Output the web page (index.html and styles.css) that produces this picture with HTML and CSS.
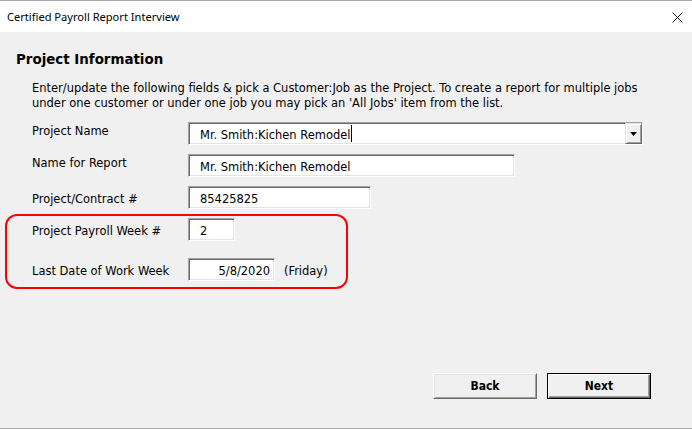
FILE: index.html
```html
<!DOCTYPE html>
<html lang="en">
<head>
<meta charset="utf-8">
<title>Certified Payroll Report Interview</title>
<link rel="stylesheet" href="styles.css">
</head>
<body>
<div class="window">
  <div class="titlebar">
    <span class="title">Certified Payroll Report Interview</span>
    <svg class="close" width="11" height="11" viewBox="0 0 11 11"><path d="M0.5 0.5 L10.5 10.5 M10.5 0.5 L0.5 10.5" stroke="#111" stroke-width="1" fill="none"/></svg>
  </div>
  <div class="content">
    <h1 class="heading">Project Information</h1>
    <p class="intro">Enter/update the following fields &amp; pick a Customer:Job as the Project. To create a report for multiple jobs<br>under one customer or under one job you may pick an 'All Jobs' item from the list.</p>
    <div class="form">
      <div class="row">
        <div class="label label-high">Project Name</div>
        <div class="combo w-combo">
          <span class="field-text">Mr. Smith:Kichen Remodel<span class="caret"></span></span>
          <span class="drop"><svg width="7" height="4" viewBox="0 0 7 4"><path d="M0 0 H7 L3.5 4 Z" fill="#000"/></svg></span>
        </div>
      </div>
      <div class="row row-gap">
        <div class="label label-high">Name for Report</div>
        <div class="field w-name"><span class="field-text">Mr. Smith:Kichen Remodel</span></div>
      </div>
      <div class="row row-gap">
        <div class="label">Project/Contract #</div>
        <div class="field w-contract"><span class="field-text">85425825</span></div>
      </div>
      <div class="highlight">
        <div class="row">
          <div class="label">Project Payroll Week #</div>
          <div class="field w-week"><span class="field-text">2</span></div>
        </div>
        <div class="row row-gap-lg">
          <div class="label">Last Date of Work Week</div>
          <div class="field w-date field-right"><span class="field-text">5/8/2020</span></div>
          <span class="note">(Friday)</span>
        </div>
      </div>
    </div>
    <div class="actions">
      <button class="btn" type="button">Back</button>
      <button class="btn btn-default" type="button">Next</button>
    </div>
  </div>
</div>
</body>
</html>
```
FILE: styles.css
```css
* { box-sizing: border-box; }
html, body { margin: 0; padding: 0; background: #f0f0f0; }
body {
  font-family: "DejaVu Sans Condensed", "DejaVu Sans", sans-serif;
  font-stretch: condensed;
  font-size: 12.75px;
  color: #000;
}
.window {
  width: 692px;
  height: 429px;
  display: flex;
  flex-direction: column;
  overflow: hidden;
}
.titlebar {
  height: 32px;
  flex: none;
  background: #fff;
  border-top: 1px solid #a8a8a8;
  display: flex;
  align-items: center;
  justify-content: space-between;
  padding: 0 9px 0 7px;
}
.title {
  font-family: "Noto Sans", "Open Sans", sans-serif;
  font-stretch: normal;
  font-size: 11.1px;
  color: #000;
}
.close { display: block; margin-top: 1px; }
.content {
  flex: 1;
  display: flex;
  flex-direction: column;
  padding: 17px 0 29px 0;
  border-bottom: 1px solid #a8a8a8;
}
.heading {
  margin: 0 0 0 16px;
  font-size: 14.9px;
  line-height: 20px;
  font-weight: bold;
}
.intro {
  margin: 11px 0 0 32px;
  line-height: 15px;
  white-space: nowrap;
}
.form {
  margin: 12px 0 0 32px;
  display: flex;
  flex-direction: column;
}
.row {
  display: flex;
  align-items: flex-start;
  height: 23px;
}
.row-gap { margin-top: 9px; }
.row-gap-lg { margin-top: 17px; }
.label {
  width: 156px;
  flex: none;
  line-height: 15px;
  padding-top: 5px;
  white-space: nowrap;
}
.label-high { padding-top: 1px; }
.field, .combo {
  height: 23px;
  background: #fff;
  border-top: 1px solid #a0a0a0;
  border-left: 1px solid #a0a0a0;
  border-right: 1px solid #fff;
  border-bottom: 1px solid #fff;
  box-shadow: inset 1px 1px 0 #696969, inset -1px -1px 0 #e3e3e3;
  display: flex;
}
.field-text {
  line-height: 15px;
  padding: 4px 0 2px 11px;
  white-space: nowrap;
}
.field-right { justify-content: flex-end; }
.field-right .field-text { padding-left: 0; padding-right: 4px; }
.caret {
  display: inline-block;
  width: 1px;
  height: 17px;
  background: #000;
  vertical-align: top;
  margin: -2px 0 0 1px;
}
.combo { justify-content: space-between; }
.drop {
  width: 17px;
  height: 21px;
  flex: none;
  background: #f0f0f0;
  border-top: 1px solid #e3e3e3;
  border-left: 1px solid #e3e3e3;
  border-right: 1px solid #696969;
  border-bottom: 1px solid #696969;
  box-shadow: inset 1px 1px 0 #fff, inset -1px -1px 0 #a0a0a0;
  display: flex;
  align-items: center;
  justify-content: center;
}
.drop svg { display: block; margin-top: 1px; }
.w-combo { width: 455px; }
.w-name { width: 327px; }
.w-contract { width: 183px; }
.w-week { width: 47px; }
.w-date { width: 87px; }
.note {
  margin-left: 9px;
  line-height: 15px;
  padding-top: 5px;
  white-space: nowrap;
}
.highlight {
  margin: 5px 0 0 -27px;
  width: 343px;
  padding: 2px 0 6px 25px;
  border: 2px solid #ff0000;
  border-radius: 12px;
}
.actions {
  margin-top: auto;
  display: flex;
  justify-content: flex-end;
  gap: 10px;
  padding-right: 41px;
}
.btn {
  width: 104px;
  height: 26px;
  margin: 0;
  padding: 0;
  font-family: "DejaVu Sans Condensed", "DejaVu Sans", sans-serif;
  font-stretch: condensed;
  font-size: 12px;
  font-weight: bold;
  color: #000;
  background: #f0f0f0;
  border-top: 1px solid #fff;
  border-left: 1px solid #fff;
  border-right: 1px solid #696969;
  border-bottom: 1px solid #696969;
  box-shadow: inset 1px 1px 0 #e3e3e3, inset -1px -1px 0 #a0a0a0;
}
.btn-default {
  border: 1px solid #000;
  box-shadow: inset 1px 1px 0 #fff, inset -1px -1px 0 #696969, inset -2px -2px 0 #a0a0a0;
}
```
